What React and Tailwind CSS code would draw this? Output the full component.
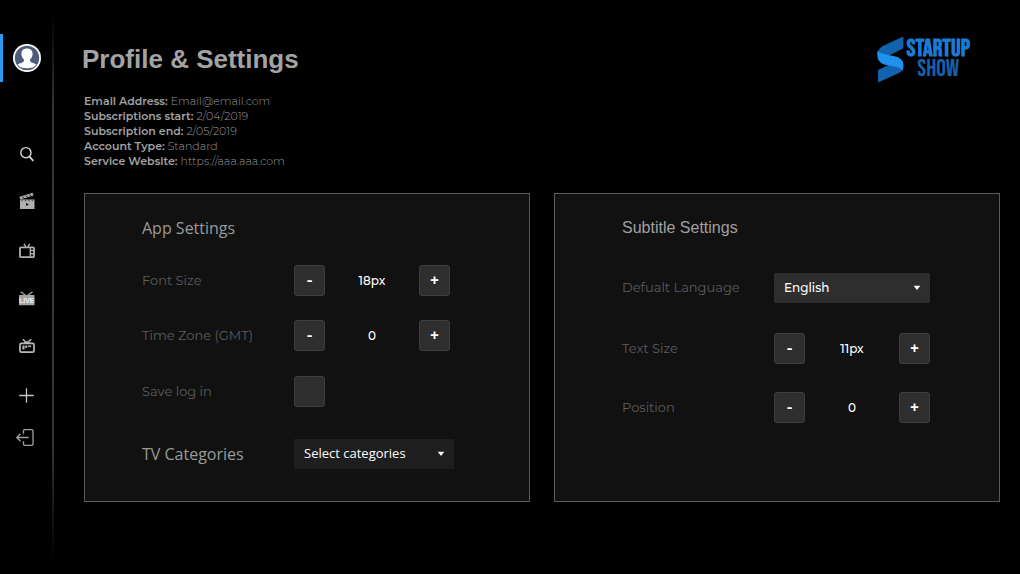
import React, { useState } from "react";

const LABEL_FONT = "font-['Montserrat','Inter',sans-serif]";
const OPEN_FONT = "font-['Open_Sans',sans-serif]";
const ARIAL_FONT = "font-['Liberation_Sans',Arial,sans-serif]";

const CATEGORIES = ["Select categories", "Movies", "Sports", "News"];
const LANGUAGES = ["English", "Spanish", "French"];

// --- ICONS ---
const AvatarIcon = () => (
  <svg viewBox="0 0 28 28" className="h-7 w-7" aria-hidden="true">
    <circle cx="14" cy="14" r="14" fill="#fff" />
    <circle cx="14" cy="14" r="12.2" fill="#4c5c78" />
    <path
      d="M14 4.500c-3.700 0-5.600 2.200-5.600 5.300 0 2.400 1 4.400 2.500 5.700.3 1.600-.2 2.400-1.500 2.900-2 .7-3.700 1-4.900 2.100a12 12 0 0 0 3.200 2.800c4 1.400 8.600 1.400 12.600 0a12 12 0 0 0 3.200-2.800c-1.200-1.100-2.900-1.400-4.900-2.100-1.300-.5-1.800-1.300-1.500-2.900 1.500-1.300 2.500-3.300 2.500-5.700 0-3.100-1.900-5.300-5.600-5.300z"
      fill="#fff"
    />
  </svg>
);

const SearchIcon = () => (
  <svg viewBox="0 0 20 20" className="h-5 w-5" fill="none" stroke="#d8d8d8" strokeWidth="1.4" aria-hidden="true">
    <circle cx="8.900" cy="8.700" r="5.100" />
    <path d="M12.500 12.600l3.800 4.300" strokeWidth="1.700" />
  </svg>
);

const MoviesIcon = () => (
  <svg viewBox="0 0 20 20" className="h-5 w-5" aria-hidden="true">
    <path d="M2.300 4.800L15.700.8l.8 2.600L3.500 7.600z" fill="#a8a8a8" />
    <path d="M5.500 4.600l1.300 1.500M9 3.600l1.300 1.500M12.500 2.500l1.200 1.500" stroke="#000" strokeWidth="0.800" />
    <path d="M3 7.500h14.500v9.500H3z" fill="#b0b0b0" />
    <path d="M4.800 8.200l.8 1M8.200 8.200l.8 1M11.600 8.200l.8 1M15 8.200l.8 1" stroke="#000" strokeWidth="0.900" />
    <path d="M9.200 10.900v3l2.600-1.500z" fill="#000" />
  </svg>
);

const TvIcon = () => (
  <svg viewBox="0 0 20 20" className="h-5 w-5" fill="none" stroke="#b0b0b0" aria-hidden="true">
    <rect x="3" y="7.300" width="14" height="9.900" rx="1" strokeWidth="1.800" />
    <path d="M13.300 7.500v9.700" strokeWidth="1.300" />
    <path d="M7 3.800l1.800 3M12.700 3.800l-1.900 3" strokeWidth="1.400" />
    <path d="M14 10.500h2.300M14 13.700h2.300" strokeWidth="1.500" />
  </svg>
);

const LiveIcon = () => (
  <svg viewBox="0 0 20 20" className="h-5 w-5" aria-hidden="true">
    <path d="M3.800 3.800L9 7.700M15.500 3.800l-5.200 3.900" stroke="#a8a8a8" strokeWidth="1.300" />
    <rect x="2" y="7" width="15.500" height="10.300" rx="0.500" fill="#a3a3a3" />
    <text x="9.700" y="14.800" textAnchor="middle" fontSize="7" fontWeight="700" fontFamily="Liberation Sans Narrow, Liberation Sans, sans-serif" fill="#f0f0f0">
      LIVE
    </text>
  </svg>
);

const ChannelsIcon = () => (
  <svg viewBox="0 0 20 20" className="h-5 w-5" fill="none" stroke="#b8b8b8" aria-hidden="true">
    <rect x="3" y="7.300" width="14" height="8.900" rx="1.500" strokeWidth="1.700" />
    <path d="M5.800 3.300l2.700 2.300M14.200 3.300l-2.700 2.300" strokeWidth="1.400" />
    <path d="M7 6.900c.5-2.200 5.500-2.200 6 0z" fill="#b8b8b8" stroke="none" />
    <path d="M5.300 9.600h2.300v3.800H5.300zM8.200 9.600h1.900v2.500H8.200zM10.700 9.600h3.500v1.500h-3.500z" fill="#a8a8a8" stroke="none" />
  </svg>
);

const PlusIcon = () => (
  <svg viewBox="0 0 20 20" className="h-5 w-5" stroke="#c4c4c4" strokeWidth="1.300" aria-hidden="true">
    <path d="M9.500 2.200v14.600M2.200 9.500h14.600" />
  </svg>
);

const LogoutIcon = () => (
  <svg viewBox="0 0 24 20" className="h-5 w-6" fill="none" stroke="#a0a0a0" strokeWidth="1.300" aria-hidden="true">
    <path d="M8.500 5.700V3c0-.8.500-1.300 1.300-1.300h6.900c.8 0 1.300.5 1.300 1.300v13c0 .8-.5 1.300-1.300 1.300H9.800c-.8 0-1.300-.5-1.300-1.300v-2.700" />
    <path d="M13.700 9.500H2M5.500 5.800L1.800 9.500l3.700 3.700" />
  </svg>
);

const CaretIcon = () => (
  <svg viewBox="0 0 8 5" className="pointer-events-none absolute right-[9px] top-1/2 h-[5px] w-2 -translate-y-1/2" aria-hidden="true">
    <path d="M0.500 0h7L4 4.600z" fill="#fff" />
  </svg>
);

const NAV_ITEMS = [
  { label: "Search", icon: SearchIcon, height: "h-12" },
  { label: "Movies", icon: MoviesIcon, height: "h-12" },
  { label: "TV", icon: TvIcon, height: "h-12" },
  { label: "Live", icon: LiveIcon, height: "h-12" },
  { label: "Channels", icon: ChannelsIcon, height: "h-12" },
  { label: "Add", icon: PlusIcon, height: "h-[52px]" },
  { label: "Log out", icon: LogoutIcon, height: "h-8" },
];

const Sidebar = () => (
  <div className="flex shrink-0">
    <nav className="flex w-[52px] flex-col pt-[34px]">
      <button type="button" aria-label="Profile" className="mb-12 flex h-12 items-center border-l-3 border-[#2b9af3] pl-[10px]">
        <AvatarIcon />
      </button>
      {NAV_ITEMS.map(({ label, icon: Icon, height }) => (
        <button key={label} type="button" aria-label={label} className={`flex items-center justify-center pl-0.5 ${height}`}>
          <Icon />
        </button>
      ))}
    </nav>
    <div className="w-0.5 bg-[linear-gradient(to_bottom,#000_2%,#333_18%,#3a3a3a_50%,#333_78%,#000_98%)]" />
  </div>
);

const Logo = () => (
  <div className="flex items-center gap-[3px]">
    <svg viewBox="0 0 82 142" className="h-[47px] w-[27px]" aria-hidden="true">
      <path d="M80 1v36L34 60 4 62C-1 44 8 34 24 27z" fill="#1262ae" />
      <path d="M79 88c2 12-2 19-14 25L3 141v-38l36-17z" fill="#1262ae" />
      <path d="M2 44c4 7 10 8 20 10l34 8c18 5 26 15 24 30 0 6-1 10-3 13-2-7-8-9-18-11L22 86C4 81-2 64 2 44z" fill="#1e92ec" />
    </svg>
    <div className="flex flex-col items-center font-['Bebas_Neue','Liberation_Sans_Narrow','Liberation_Sans',sans-serif] text-2xl leading-5">
      <span className="font-bold text-[#1a7bd6]">STARTUP</span>
      <span className="font-light text-[#1561aa]">SHOW</span>
    </div>
  </div>
);

const InfoLine = ({ label, value }) => (
  <div className="flex gap-[3px]">
    <dt className="font-semibold text-[#a2a2a2]">{label}</dt>
    <dd className="font-light text-[#989898]">{value}</dd>
  </div>
);

// --- FORM CONTROLS ---
const Panel = ({ children, className }) => (
  <section className={`min-h-[309px] border border-[#5a5a5a] bg-[#111111] pt-[22px] pb-8 ${className}`}>
    {children}
  </section>
);

const Row = ({ label, htmlFor, className = "", labelClass = "", children }) => (
  <div className={`flex items-center ${className}`}>
    <label htmlFor={htmlFor} className={`w-[152px] shrink-0 ${labelClass || `${LABEL_FONT} text-[13px] text-[#5c5c5c]`}`}>
      {label}
    </label>
    {children}
  </div>
);

const StepButton = ({ children, ...props }) => (
  <button
    type="button"
    className="flex h-[31px] w-[31px] items-center justify-center rounded-[3px] border border-[#3e3e3e] bg-[#2e2e2e] text-base font-semibold text-white"
    {...props}
  >
    {children}
  </button>
);

const Stepper = ({ id, name, initial, unit = "" }) => {
  const [value, setValue] = useState(initial);

  return (
    <div className={`flex w-[156px] items-center justify-between text-xs font-medium text-white ${LABEL_FONT}`}>
      <StepButton aria-label={`Decrease ${name}`} onClick={() => setValue(value - 1)}>-</StepButton>
      <output id={id}>{value}{unit}</output>
      <StepButton aria-label={`Increase ${name}`} onClick={() => setValue(value + 1)}>+</StepButton>
    </div>
  );
};

const Dropdown = ({ id, options, className }) => (
  <div className="relative">
    <select id={id} className={`h-[30px] appearance-none pl-[10px] pr-6 text-white ${className}`}>
      {options.map((option) => (
        <option key={option}>{option}</option>
      ))}
    </select>
    <CaretIcon />
  </div>
);

export default function App() {
  const [saveLogin, setSaveLogin] = useState(false);

  return (
    <div className="flex min-h-screen bg-black">
      <Sidebar />

      <main className="flex-1 pt-[35px]">
        <header className="flex h-12 items-center justify-between pl-7 pr-[50px]">
          <h1 className={`text-[26px] font-bold text-[#a3a3a3] ${ARIAL_FONT}`}>Profile &amp; Settings</h1>
          <Logo />
        </header>

        <div className="pl-[30px] pr-5 pt-[11px]">
          <dl className={`text-[11px] leading-[15px] ${LABEL_FONT}`}>
            <InfoLine label="Email Address:" value="Email@email.com" />
            <InfoLine label="Subscriptions start:" value="2/04/2019" />
            <InfoLine label="Subscription end:" value="2/05/2019" />
            <InfoLine label="Account Type:" value="Standard" />
            <InfoLine label="Service Website:" value="https://aaa.aaa.com" />
          </dl>

          <div className="mt-6 grid grid-cols-2 gap-6">
            {/* App settings */}
            <Panel className="pl-[57px]">
              <h2 className={`mb-[25px] text-base leading-6 text-[#9a9a9a] ${OPEN_FONT}`}>App Settings</h2>
              <Row label="Font Size" htmlFor="font-size">
                <Stepper id="font-size" name="font size" initial={18} unit="px" />
              </Row>
              <Row label="Time Zone (GMT)" htmlFor="time-zone" className="mt-6">
                <Stepper id="time-zone" name="time zone" initial={0} />
              </Row>
              <Row label="Save log in" htmlFor="save-login" className="mt-[25px]">
                <input
                  id="save-login"
                  type="checkbox"
                  checked={saveLogin}
                  onChange={(e) => setSaveLogin(e.target.checked)}
                  className="h-[31px] w-[31px] appearance-none rounded-[3px] border border-[#3e3e3e] bg-[#2e2e2e] checked:bg-[#2b9af3]"
                />
              </Row>
              <Row label="TV Categories" htmlFor="tv-categories" className="mt-8" labelClass={`${OPEN_FONT} text-base text-[#9a9a9a]`}>
                <Dropdown id="tv-categories" options={CATEGORIES} className={`w-40 bg-[#1e1e1e] text-[13px] ${OPEN_FONT}`} />
              </Row>
            </Panel>

            {/* Subtitle settings */}
            <Panel className="pl-[67px]">
              <h2 className={`mb-[33px] text-base leading-6 text-[#a0a0a0] ${ARIAL_FONT}`}>Subtitle Settings</h2>
              <Row label="Defualt Language" htmlFor="language">
                <Dropdown id="language" options={LANGUAGES} className={`w-[156px] rounded-[2px] bg-[#2e2e2e] text-xs font-medium ${LABEL_FONT}`} />
              </Row>
              <Row label="Text Size" htmlFor="text-size" className="mt-[30px]">
                <Stepper id="text-size" name="text size" initial={11} unit="px" />
              </Row>
              <Row label="Position" htmlFor="position" className="mt-7">
                <Stepper id="position" name="position" initial={0} />
              </Row>
            </Panel>
          </div>
        </div>
      </main>
    </div>
  );
}
